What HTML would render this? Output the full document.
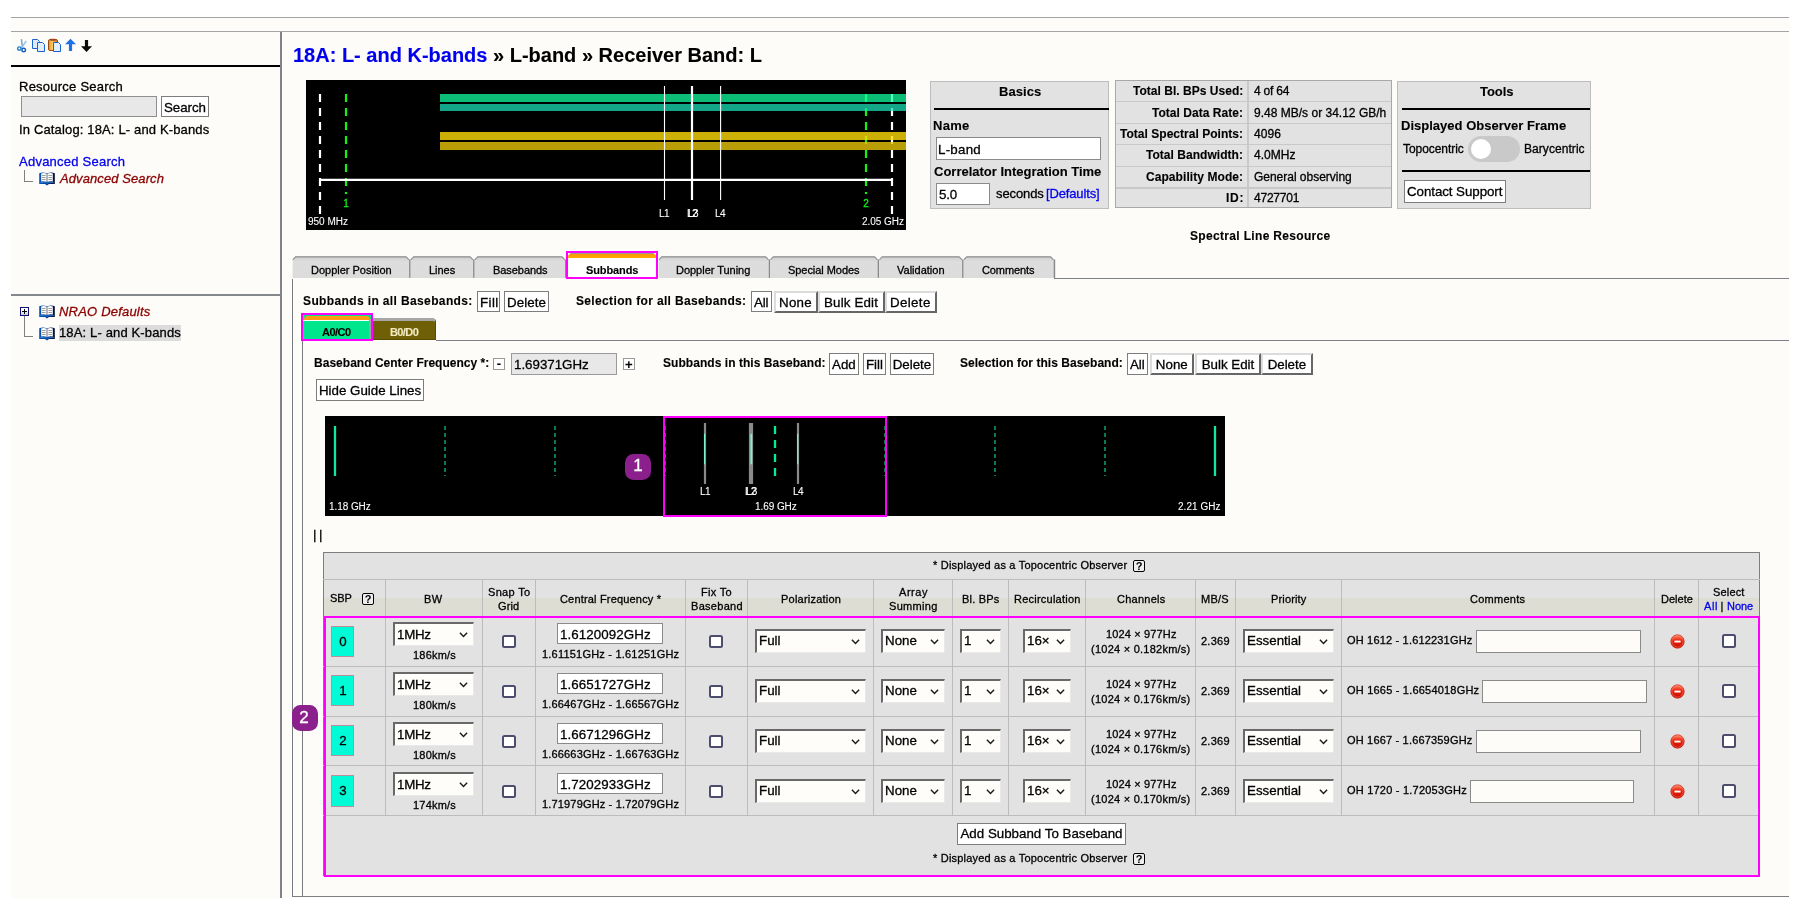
<!DOCTYPE html>
<html><head><meta charset="utf-8"><title>Resource Catalog Tool</title>
<style>
html,body{margin:0;padding:0;background:#fff;}
body{width:1805px;height:912px;position:relative;overflow:hidden;font-family:"Liberation Sans",Arial,Helvetica,sans-serif;}
.t{position:absolute;white-space:nowrap;-webkit-text-stroke:0.3px;will-change:transform;}
.bd{font-weight:bold;-webkit-text-stroke:0.12px;}
.b{position:absolute;}
.btn{position:absolute;box-sizing:border-box;border:1px solid #7d7d7d;background:#fff;}
.btn3{position:absolute;box-sizing:border-box;border:2px solid;border-color:#dcdcdc #666 #666 #dcdcdc;background:#fff;}
.sel{position:absolute;box-sizing:border-box;border:solid;border-width:2.2px 1.8px 1.9px 2.1px;border-color:#696969 #e9e9e9 #e9e9e9 #696969;background:#fefdfa;}
.sel .chev{position:absolute;right:4.6px;top:50%;margin-top:-2.2px;}
.chk{position:absolute;box-sizing:border-box;width:13.6px;height:13.6px;border:2px solid #4c4c6e;border-radius:2.5px;background:#fff;}
.inp{position:absolute;box-sizing:border-box;border:1px solid #8a8a8a;}
.q{position:absolute;box-sizing:border-box;width:12.2px;height:12.2px;border:1.2px solid #000;border-radius:2px;font-size:11px;font-weight:bold;line-height:10.6px;text-align:center;color:#000;background:#eee;will-change:transform;}
a{color:#0000ee;text-decoration:none}
</style></head><body>

<div class="b" style="left:11px;top:17px;width:1778px;height:880.5px;background:#fefcf8"></div>
<div class="b" style="left:11px;top:17px;width:1778px;height:1px;background:#a2a4a6"></div>
<div class="b" style="left:11px;top:31px;width:1778px;height:1px;background:#a2a4a6"></div>
<div class="b" style="left:280.1px;top:32px;width:1.9px;height:865.5px;background:#808488"></div>
<div class="b" style="left:11px;top:65px;width:269px;height:2px;background:#000"></div>
<div class="b" style="left:11px;top:294.3px;width:270px;height:1.6px;background:#84888c"></div>
<svg class="b" style="left:16px;top:38px" width="80" height="15" viewBox="0 0 80 15">
<path d="M5.4 1.2 L6.4 9.4" stroke="#6fa8dc" stroke-width="1.5" fill="none"/>
<path d="M10.2 3 L5.4 10" stroke="#9cc3e8" stroke-width="1.5" fill="none"/>
<circle cx="3.3" cy="10.6" r="1.7" fill="none" stroke="#1a7fd0" stroke-width="1.4"/>
<circle cx="7.7" cy="12" r="1.8" fill="none" stroke="#1a5fc0" stroke-width="1.4"/>
<path d="M16.5 1.5 H21.5 L23.5 3.5 V10.5 H16.5 Z" fill="#dfeafa" stroke="#1c62d2" stroke-width="1"/>
<path d="M21.5 4.5 H26.5 L28.5 6.5 V13.5 H21.5 Z" fill="#e3eefc" stroke="#1c62d2" stroke-width="1"/>
<defs><linearGradient id="pg" x1="0" y1="0" x2="1" y2="0"><stop offset="0" stop-color="#e09020"/><stop offset="0.45" stop-color="#f6cf6a"/><stop offset="1" stop-color="#c87410"/></linearGradient></defs><rect x="32.5" y="1.5" width="9" height="11" rx="1.5" fill="url(#pg)" stroke="#9a4a0c" stroke-width="1"/>
<rect x="34.5" y="0.8" width="5" height="2" fill="#a5401a"/>
<path d="M37.5 4.5 H42.5 L44.5 6.5 V13.5 H37.5 Z" fill="#e3eefc" stroke="#1c62d2" stroke-width="1"/>
<path d="M54.5 0.8 L60 6.2 H56.1 V13 H52.9 V6.2 H49 Z" fill="#1f6fe6"/>
<path d="M70.5 14 L76 8.2 H72.1 V2 H68.9 V8.2 H65 Z" fill="#0a0a0a"/>
</svg>
<div class="t" style="left:19px;top:79px;font-size:13px;line-height:16px;color:#000;letter-spacing:0.243px;">Resource Search</div>
<div class="inp" style="left:21px;top:96.3px;width:136px;height:21.200000000000003px;background:#e8e8e8;border-color:#8f8f8f"></div>
<div class="btn" style="left:161px;top:96.3px;width:48px;height:21.200000000000003px;"></div>
<div class="t" style="left:164px;top:100px;font-size:13.33px;line-height:16px;color:#000;letter-spacing:-0.060px;">Search</div>
<div class="t" style="left:19px;top:122px;font-size:13px;line-height:16px;color:#000;letter-spacing:0.150px;">In Catalog: 18A: L- and K-bands</div>
<div class="t" style="left:19px;top:154px;font-size:13px;line-height:16px;color:#0000ee;letter-spacing:0.243px;">Advanced Search</div>
<div class="b" style="left:24.1px;top:170px;width:1px;height:11.5px;background:#808080"></div>
<div class="b" style="left:24.1px;top:180.8px;width:8.8px;height:1px;background:#808080"></div>
<svg class="b" style="left:39px;top:172px" width="16" height="13.6" viewBox="0 0 16 13.6">
<defs><linearGradient id="bk172" x1="0" y1="0" x2="1" y2="0"><stop offset="0" stop-color="#0856b8"/><stop offset="0.55" stop-color="#063a98"/><stop offset="1" stop-color="#020a30"/></linearGradient></defs>
<path d="M0.2 1.2 Q4 -0.2 8 1.4 Q12 -0.2 15.8 1.2 V12 H10 L8 13.5 L6 12 H0.2 Z" fill="url(#bk172)"/>
<path d="M1 10.4 H6.6 L8 11.4 L9.4 10.4 H15" stroke="#2f8fe0" stroke-width="0.7" fill="none"/>
<path d="M2.2 1.5 Q5 0.5 7.9 1.9 V9.9 Q5 8.9 2.2 9.6 Z" fill="#fff"/>
<path d="M13.8 1.5 Q11 0.5 8.1 1.9 V9.9 Q11 8.9 13.8 9.6 Z" fill="#fff"/>
<path d="M8 1.9 V10" stroke="#666" stroke-width="0.8"/>
<path d="M3 3.5 H6.6 M3 5.5 H6.6 M3 7.5 H6.6 M9.4 3.5 H13 M9.4 5.5 H13 M9.4 7.5 H13" stroke="#9c9c9c" stroke-width="1"/>
</svg>
<div class="t" style="left:60px;top:171px;font-size:13px;line-height:16px;color:#8b0000;letter-spacing:0.093px;font-style:italic;">Advanced Search</div>
<div class="b" style="left:20px;top:307px;width:9.2px;height:9.2px;box-sizing:border-box;border:1.4px solid #10107a;background:linear-gradient(#fff 40%,#c8c8c8)"></div>
<div class="b" style="left:22px;top:311px;width:5.2px;height:1.2px;background:#000"></div>
<div class="b" style="left:24px;top:309px;width:1.2px;height:5.2px;background:#000"></div>
<div class="b" style="left:24.1px;top:316px;width:1px;height:21px;background:#808080"></div>
<div class="b" style="left:24.1px;top:336.3px;width:8.7px;height:1px;background:#808080"></div>
<svg class="b" style="left:39px;top:305px" width="16" height="13.6" viewBox="0 0 16 13.6">
<defs><linearGradient id="bk305" x1="0" y1="0" x2="1" y2="0"><stop offset="0" stop-color="#0856b8"/><stop offset="0.55" stop-color="#063a98"/><stop offset="1" stop-color="#020a30"/></linearGradient></defs>
<path d="M0.2 1.2 Q4 -0.2 8 1.4 Q12 -0.2 15.8 1.2 V12 H10 L8 13.5 L6 12 H0.2 Z" fill="url(#bk305)"/>
<path d="M1 10.4 H6.6 L8 11.4 L9.4 10.4 H15" stroke="#2f8fe0" stroke-width="0.7" fill="none"/>
<path d="M2.2 1.5 Q5 0.5 7.9 1.9 V9.9 Q5 8.9 2.2 9.6 Z" fill="#fff"/>
<path d="M13.8 1.5 Q11 0.5 8.1 1.9 V9.9 Q11 8.9 13.8 9.6 Z" fill="#fff"/>
<path d="M8 1.9 V10" stroke="#666" stroke-width="0.8"/>
<path d="M3 3.5 H6.6 M3 5.5 H6.6 M3 7.5 H6.6 M9.4 3.5 H13 M9.4 5.5 H13 M9.4 7.5 H13" stroke="#9c9c9c" stroke-width="1"/>
</svg>
<div class="t" style="left:59px;top:304px;font-size:13px;line-height:16px;color:#8b0000;letter-spacing:0.200px;font-style:italic;">NRAO Defaults</div>
<svg class="b" style="left:39px;top:327px" width="16" height="13.6" viewBox="0 0 16 13.6">
<defs><linearGradient id="bk327" x1="0" y1="0" x2="1" y2="0"><stop offset="0" stop-color="#0856b8"/><stop offset="0.55" stop-color="#063a98"/><stop offset="1" stop-color="#020a30"/></linearGradient></defs>
<path d="M0.2 1.2 Q4 -0.2 8 1.4 Q12 -0.2 15.8 1.2 V12 H10 L8 13.5 L6 12 H0.2 Z" fill="url(#bk327)"/>
<path d="M1 10.4 H6.6 L8 11.4 L9.4 10.4 H15" stroke="#2f8fe0" stroke-width="0.7" fill="none"/>
<path d="M2.2 1.5 Q5 0.5 7.9 1.9 V9.9 Q5 8.9 2.2 9.6 Z" fill="#fff"/>
<path d="M13.8 1.5 Q11 0.5 8.1 1.9 V9.9 Q11 8.9 13.8 9.6 Z" fill="#fff"/>
<path d="M8 1.9 V10" stroke="#666" stroke-width="0.8"/>
<path d="M3 3.5 H6.6 M3 5.5 H6.6 M3 7.5 H6.6 M9.4 3.5 H13 M9.4 5.5 H13 M9.4 7.5 H13" stroke="#9c9c9c" stroke-width="1"/>
</svg>
<div class="b" style="left:59px;top:325px;width:122px;height:16px;background:#dcdcdc"></div>
<div class="t" style="left:59px;top:325px;font-size:13px;line-height:16px;color:#000;letter-spacing:0.139px;">18A: L- and K-bands</div>
<div class="t" style="top:43.22px;font-size:20px;line-height:24px;color:#000;font-weight:bold;-webkit-text-stroke:0.12px;left:293px;"><a>18A: L- and K-bands</a> » L-band » Receiver Band: L</div>
<svg class="b" style="left:306px;top:80px" width="600" height="150" viewBox="0 0 600 150">
<rect width="600" height="150" fill="#000"/>
<path d="M14 14 V134 M586 14 V134" stroke="#fff" stroke-width="2.2" stroke-dasharray="8 6"/>
<path d="M40 14 V114 M560 14 V114" stroke="#14f014" stroke-width="2.2" stroke-dasharray="8 6"/>
<path d="M14 99.8 H586" stroke="#fff" stroke-width="2.2"/>
<rect x="134" y="14" width="466" height="8" fill="#10ffa0" fill-opacity="0.74"/>
<rect x="134" y="24" width="466" height="7" fill="#1ae0b8" fill-opacity="0.74"/>
<rect x="134" y="52" width="466" height="8" fill="#ffdc08" fill-opacity="0.8"/>
<rect x="134" y="62" width="466" height="8" fill="#e8c60a" fill-opacity="0.8"/>
<path d="M358.5 6 V120 M414.6 6 V120" stroke="#fff" stroke-width="1.1"/>
<path d="M386 6 V120" stroke="#fff" stroke-width="2.2"/>
</svg>
<div class="t" style="left:308px;top:216px;font-size:10px;line-height:12px;color:#fff;letter-spacing:0.000px;-webkit-text-stroke:0.08px;">950 MHz</div>
<div class="t" style="left:862px;top:216px;font-size:10px;line-height:12px;color:#fff;letter-spacing:-0.043px;-webkit-text-stroke:0.08px;">2.05 GHz</div>
<div class="t" style="left:659px;top:208px;font-size:10px;line-height:12px;color:#fff;letter-spacing:-0.600px;-webkit-text-stroke:0.08px;">L1</div>
<div class="t" style="left:687px;top:208px;font-size:10px;line-height:12px;color:#fff;letter-spacing:-0.600px;-webkit-text-stroke:0.08px;">L2</div>
<div class="t" style="left:688px;top:208px;font-size:10px;line-height:12px;color:#fff;letter-spacing:-0.600px;-webkit-text-stroke:0.08px;">L3</div>
<div class="t" style="left:715px;top:208px;font-size:10px;line-height:12px;color:#fff;letter-spacing:-0.600px;-webkit-text-stroke:0.08px;">L4</div>
<div class="t" style="top:197.78px;font-size:10px;line-height:12px;color:#14f014;left:335.8px;width:20px;text-align:center;">1</div>
<div class="t" style="top:197.78px;font-size:10px;line-height:12px;color:#14f014;left:856.0px;width:20px;text-align:center;">2</div>
<div class="b" style="left:930.3px;top:81.3px;width:178.5px;height:127.6px;box-sizing:border-box;background:#e2e2e2;border:1px solid #bdbdbd"></div>
<div class="t" style="left:999px;top:84px;font-size:13px;line-height:16px;color:#000;letter-spacing:0.060px;font-weight:bold;-webkit-text-stroke:0.12px;">Basics</div>
<div class="b" style="left:934px;top:107.8px;width:174.5px;height:2px;background:#000"></div>
<div class="t" style="left:933px;top:118px;font-size:13px;line-height:16px;color:#000;letter-spacing:0.267px;font-weight:bold;-webkit-text-stroke:0.12px;">Name</div>
<div class="inp" style="left:936.2px;top:137.3px;width:164.79999999999995px;height:22.399999999999977px;background:#fff;border-color:#8a8a8a"></div>
<div class="t" style="left:938px;top:142px;font-size:13.33px;line-height:16px;color:#000;letter-spacing:0.240px;">L-band</div>
<div class="t" style="left:934px;top:164px;font-size:13px;line-height:16px;color:#000;letter-spacing:0.000px;font-weight:bold;-webkit-text-stroke:0.12px;">Correlator Integration Time</div>
<div class="inp" style="left:936.2px;top:183.2px;width:53.39999999999998px;height:22.30000000000001px;background:#fff;border-color:#8a8a8a"></div>
<div class="t" style="left:939px;top:187px;font-size:13.33px;line-height:16px;color:#000;letter-spacing:-0.200px;">5.0</div>
<div class="t" style="left:996px;top:186px;font-size:13px;line-height:16px;color:#000;letter-spacing:-0.100px;">seconds</div>
<div class="t" style="left:1046px;top:186px;font-size:13px;line-height:16px;color:#0000ee;letter-spacing:-0.144px;">[Defaults]</div>
<div class="b" style="left:1114.5px;top:80.4px;width:277.0px;height:128.1px;box-sizing:border-box;background:#e2e2e2;border:1px solid #a8a8a8"></div>
<div class="b" style="left:1115.5px;top:100.5px;width:275.0px;height:1.8px;background:#c9c9c9"></div>
<div class="b" style="left:1115.5px;top:122.7px;width:275.0px;height:1.8px;background:#c9c9c9"></div>
<div class="b" style="left:1115.5px;top:143.6px;width:275.0px;height:1.8px;background:#c9c9c9"></div>
<div class="b" style="left:1115.5px;top:165.6px;width:275.0px;height:1.8px;background:#c9c9c9"></div>
<div class="b" style="left:1115.5px;top:186.89999999999998px;width:275.0px;height:1.8px;background:#c9c9c9"></div>
<div class="b" style="left:1247.4px;top:81.4px;width:1.8px;height:126px;background:#c9c9c9"></div>
<div class="t" style="left:1133px;top:84px;font-size:12px;line-height:14px;color:#000;letter-spacing:0.028px;font-weight:bold;-webkit-text-stroke:0.12px;">Total Bl. BPs Used:</div>
<div class="t" style="left:1254px;top:84px;font-size:12px;line-height:14px;color:#000;letter-spacing:-0.217px;">4 of 64</div>
<div class="t" style="left:1152px;top:106px;font-size:12px;line-height:14px;color:#000;letter-spacing:0.033px;font-weight:bold;-webkit-text-stroke:0.12px;">Total Data Rate:</div>
<div class="t" style="left:1254px;top:106px;font-size:12px;line-height:14px;color:#000;letter-spacing:0.009px;">9.48 MB/s or 34.12 GB/h</div>
<div class="t" style="left:1120px;top:127px;font-size:12px;line-height:14px;color:#000;letter-spacing:0.024px;font-weight:bold;-webkit-text-stroke:0.12px;">Total Spectral Points:</div>
<div class="t" style="left:1254px;top:127px;font-size:12px;line-height:14px;color:#000;letter-spacing:0.067px;">4096</div>
<div class="t" style="left:1146px;top:148px;font-size:12px;line-height:14px;color:#000;letter-spacing:0.033px;font-weight:bold;-webkit-text-stroke:0.12px;">Total Bandwidth:</div>
<div class="t" style="left:1254px;top:148px;font-size:12px;line-height:14px;color:#000;letter-spacing:0.040px;">4.0MHz</div>
<div class="t" style="left:1146px;top:170px;font-size:12px;line-height:14px;color:#000;letter-spacing:0.067px;font-weight:bold;-webkit-text-stroke:0.12px;">Capability Mode:</div>
<div class="t" style="left:1254px;top:170px;font-size:12px;line-height:14px;color:#000;letter-spacing:-0.019px;">General observing</div>
<div class="t" style="left:1226px;top:191px;font-size:12px;line-height:14px;color:#000;letter-spacing:0.750px;font-weight:bold;-webkit-text-stroke:0.12px;">ID:</div>
<div class="t" style="left:1254px;top:191px;font-size:12px;line-height:14px;color:#000;letter-spacing:-0.217px;">4727701</div>
<div class="b" style="left:1397.2px;top:81.3px;width:193.4px;height:127.6px;box-sizing:border-box;background:#e2e2e2;border:1px solid #bdbdbd"></div>
<div class="t" style="left:1480px;top:84px;font-size:13px;line-height:16px;color:#000;letter-spacing:-0.050px;font-weight:bold;-webkit-text-stroke:0.12px;">Tools</div>
<div class="b" style="left:1402.2px;top:107.8px;width:188px;height:2px;background:#000"></div>
<div class="t" style="left:1401px;top:118px;font-size:13px;line-height:16px;color:#000;letter-spacing:0.017px;font-weight:bold;-webkit-text-stroke:0.12px;">Displayed Observer Frame</div>
<div class="t" style="left:1403px;top:142px;font-size:12px;line-height:14px;color:#000;letter-spacing:-0.060px;">Topocentric</div>
<div class="b" style="left:1468px;top:136px;width:52px;height:26px;background:#c9c9c9;border-radius:13px"></div>
<div class="b" style="left:1470.5px;top:138.7px;width:20.8px;height:20.8px;background:#fff;border-radius:11px"></div>
<div class="t" style="left:1524px;top:142px;font-size:12px;line-height:14px;color:#000;letter-spacing:0.060px;">Barycentric</div>
<div class="b" style="left:1402.2px;top:170.2px;width:188px;height:2px;background:#000"></div>
<div class="btn" style="left:1404.2px;top:180.3px;width:101.70000000000005px;height:22.399999999999977px;"></div>
<div class="t" style="left:1407px;top:184px;font-size:13.33px;line-height:16px;color:#000;letter-spacing:-0.064px;">Contact Support</div>
<div class="t" style="left:1190px;top:229px;font-size:12px;line-height:14px;color:#000;letter-spacing:0.329px;font-weight:bold;-webkit-text-stroke:0.12px;">Spectral Line Resource</div>
<svg class="b" style="left:290px;top:250px" width="780" height="30" viewBox="290 250 780 30">
<defs><linearGradient id="tg" x1="0" y1="0" x2="0" y2="1"><stop offset="0" stop-color="#cfcfcf"/><stop offset="0.25" stop-color="#dddddd"/><stop offset="1" stop-color="#dcdcdc"/></linearGradient></defs>
<path d="M292.6 277.9 V259.4 L295.6 256.4 H406.09999999999997 L409.09999999999997 259.4 V277.9 Z" fill="url(#tg)"/>
<path d="M292.90000000000003 259.59999999999997 L295.6 256.9 H406.09999999999997 L408.79999999999995 259.59999999999997" fill="none" stroke="#8e8e8e" stroke-width="1.1"/>
<rect x="409.09999999999997" y="259.4" width="1.6" height="18.5" fill="#8a8a8a"/>
<path d="M410.7 277.9 V259.4 L413.7 256.4 H470.09999999999997 L473.09999999999997 259.4 V277.9 Z" fill="url(#tg)"/>
<path d="M411.0 259.59999999999997 L413.7 256.9 H470.09999999999997 L472.79999999999995 259.59999999999997" fill="none" stroke="#8e8e8e" stroke-width="1.1"/>
<rect x="473.09999999999997" y="259.4" width="1.6" height="18.5" fill="#8a8a8a"/>
<path d="M474.7 277.9 V259.4 L477.7 256.4 H562.0 L565.0 259.4 V277.9 Z" fill="url(#tg)"/>
<path d="M475.0 259.59999999999997 L477.7 256.9 H562.0 L564.7 259.59999999999997" fill="none" stroke="#8e8e8e" stroke-width="1.1"/>
<rect x="565.0" y="259.4" width="1.6" height="18.5" fill="#8a8a8a"/>
<path d="M658.8 277.9 V259.4 L661.8 256.4 H765.6999999999999 L768.6999999999999 259.4 V277.9 Z" fill="url(#tg)"/>
<path d="M659.0999999999999 259.59999999999997 L661.8 256.9 H765.6999999999999 L768.4 259.59999999999997" fill="none" stroke="#8e8e8e" stroke-width="1.1"/>
<rect x="768.6999999999999" y="259.4" width="1.6" height="18.5" fill="#8a8a8a"/>
<path d="M770.3 277.9 V259.4 L773.3 256.4 H874.6 L877.6 259.4 V277.9 Z" fill="url(#tg)"/>
<path d="M770.5999999999999 259.59999999999997 L773.3 256.9 H874.6 L877.3000000000001 259.59999999999997" fill="none" stroke="#8e8e8e" stroke-width="1.1"/>
<rect x="877.6" y="259.4" width="1.6" height="18.5" fill="#8a8a8a"/>
<path d="M879.2 277.9 V259.4 L882.2 256.4 H959.1 L962.1 259.4 V277.9 Z" fill="url(#tg)"/>
<path d="M879.5 259.59999999999997 L882.2 256.9 H959.1 L961.8000000000001 259.59999999999997" fill="none" stroke="#8e8e8e" stroke-width="1.1"/>
<rect x="962.1" y="259.4" width="1.6" height="18.5" fill="#8a8a8a"/>
<path d="M963.7 277.9 V259.4 L966.7 256.4 H1050.6000000000001 L1053.6000000000001 259.4 V277.9 Z" fill="url(#tg)"/>
<path d="M964.0 259.59999999999997 L966.7 256.9 H1050.6000000000001 L1053.3000000000002 259.59999999999997" fill="none" stroke="#8e8e8e" stroke-width="1.1"/>
<rect x="1053.6000000000001" y="259.4" width="1.6" height="18.5" fill="#8a8a8a"/>
</svg>
<div class="t" style="left:311px;top:264px;font-size:11px;line-height:13px;color:#000;letter-spacing:-0.007px;">Doppler Position</div>
<div class="t" style="left:429px;top:264px;font-size:11px;line-height:13px;color:#000;letter-spacing:-0.025px;">Lines</div>
<div class="t" style="left:493px;top:264px;font-size:11px;line-height:13px;color:#000;letter-spacing:-0.062px;">Basebands</div>
<div class="b" style="left:566px;top:251px;width:92.1px;height:27.9px;box-sizing:border-box;border:2px solid #ff00ff;background:#fff"></div>
<svg class="b" style="left:568px;top:253px" width="88.1" height="5.2" viewBox="0 0 88.1 5.2"><defs><linearGradient id="og" x1="0" y1="0" x2="0" y2="1"><stop offset="0" stop-color="#ff9500"/><stop offset="1" stop-color="#ffa900"/></linearGradient></defs><path d="M0 5.2 V2.6 L2.4 0.2 H85.7 L88.1 2.6 V5.2 Z" fill="url(#og)"/><path d="M2.4 0.6 H85.7" stroke="#8a9a8a" stroke-width="0.9"/></svg>
<div class="t" style="left:586px;top:264px;font-size:11px;line-height:13px;color:#000;letter-spacing:-0.100px;font-weight:bold;-webkit-text-stroke:0.12px;">Subbands</div>
<div class="t" style="left:676px;top:264px;font-size:11px;line-height:13px;color:#000;letter-spacing:-0.023px;">Doppler Tuning</div>
<div class="t" style="left:788px;top:264px;font-size:11px;line-height:13px;color:#000;letter-spacing:-0.050px;">Special Modes</div>
<div class="t" style="left:897px;top:264px;font-size:11px;line-height:13px;color:#000;letter-spacing:0.000px;">Validation</div>
<div class="t" style="left:982px;top:264px;font-size:11px;line-height:13px;color:#000;letter-spacing:-0.100px;">Comments</div>
<div class="b" style="left:1053.7px;top:278px;width:735.3px;height:1px;background:#7c8084"></div>
<div class="b" style="left:292px;top:279px;width:1.1px;height:618px;background:#777a7e"></div>
<div class="b" style="left:292px;top:896.2px;width:1497px;height:1px;background:#7c8084"></div>
<div class="t" style="left:303px;top:294px;font-size:12px;line-height:14px;color:#000;letter-spacing:0.372px;font-weight:bold;-webkit-text-stroke:0.12px;">Subbands in all Basebands:</div>
<div class="btn" style="left:477.2px;top:291.3px;width:22.5px;height:21.19999999999999px;"></div>
<div class="t" style="left:480px;top:295px;font-size:13.33px;line-height:16px;color:#000;letter-spacing:0.400px;">Fill</div>
<div class="btn" style="left:504.2px;top:291.3px;width:44.599999999999966px;height:21.19999999999999px;"></div>
<div class="t" style="left:507px;top:295px;font-size:13.33px;line-height:16px;color:#000;letter-spacing:0.080px;">Delete</div>
<div class="t" style="left:576px;top:294px;font-size:12px;line-height:14px;color:#000;letter-spacing:0.348px;font-weight:bold;-webkit-text-stroke:0.12px;">Selection for all Basebands:</div>
<div class="btn" style="left:751px;top:291.4px;width:20.600000000000023px;height:21.100000000000023px;"></div>
<div class="t" style="left:754px;top:295px;font-size:13.33px;line-height:16px;color:#000;letter-spacing:-0.200px;">All</div>
<div class="btn3" style="left:774.4px;top:291.4px;width:43.39999999999998px;height:21.600000000000023px;"></div>
<div class="t" style="left:779px;top:295px;font-size:13.33px;line-height:16px;color:#000;letter-spacing:0.267px;">None</div>
<div class="btn3" style="left:818px;top:291.4px;width:66.60000000000002px;height:21.600000000000023px;"></div>
<div class="t" style="left:824px;top:295px;font-size:13.33px;line-height:16px;color:#000;letter-spacing:0.162px;">Bulk Edit</div>
<div class="btn3" style="left:884.8px;top:291.4px;width:52.0px;height:21.600000000000023px;"></div>
<div class="t" style="left:890px;top:295px;font-size:13.33px;line-height:16px;color:#000;letter-spacing:0.360px;">Delete</div>
<div class="b" style="left:301px;top:313.2px;width:72px;height:27.6px;box-sizing:border-box;border:2px solid #ff00ff;background:#00e68c"></div>
<div class="b" style="left:303.5px;top:316.3px;width:66.5px;height:4.2px;background:#ff9c12;border-radius:4px 4px 0 0"></div>
<div class="b" style="left:303px;top:320.4px;width:67px;height:0.9px;background:#fff"></div>
<div class="b" style="left:369.3px;top:318.5px;width:1.7px;height:20.5px;background:#a0a0a0"></div>
<div class="t" style="left:322px;top:326px;font-size:11px;line-height:13px;color:#000;letter-spacing:-0.525px;font-weight:bold;-webkit-text-stroke:0.12px;">A0/C0</div>
<div class="b" style="left:373px;top:318px;width:62.8px;height:21.8px;background:#6f5f06;border-top:3px solid #a6a6a6;box-sizing:border-box;border-radius:0 4px 0 0;border-right:1px solid #5a4c04;border-bottom:1px solid #5a4c04"></div>
<div class="t" style="left:390px;top:326px;font-size:11px;line-height:13px;color:#f3ebc0;letter-spacing:-0.600px;font-weight:bold;-webkit-text-stroke:0.12px;">B0/D0</div>
<div class="b" style="left:435.8px;top:340px;width:1353.2px;height:1px;background:#7c8084"></div>
<div class="b" style="left:302.1px;top:340.5px;width:1px;height:556px;background:#777a7e"></div>
<div class="t" style="left:314px;top:356px;font-size:12px;line-height:14px;color:#000;letter-spacing:0.022px;font-weight:bold;-webkit-text-stroke:0.12px;">Baseband Center Frequency *:</div>
<div class="btn" style="left:493.1px;top:358.3px;width:11.599999999999966px;height:11.399999999999977px;border-color:#9a9a9a"></div>
<div class="t" style="top:356.35px;font-size:13px;line-height:16px;color:#000;font-weight:bold;-webkit-text-stroke:0.12px;left:473.1px;width:51.599999999999966px;text-align:center;">-</div>
<div class="inp" style="left:511.1px;top:353.3px;width:105.89999999999998px;height:21.399999999999977px;background:#e8e8e8;border-color:#9a9a9a"></div>
<div class="t" style="left:514px;top:357px;font-size:13.33px;line-height:16px;color:#000;letter-spacing:-0.011px;">1.69371GHz</div>
<div class="btn" style="left:623.2px;top:358.3px;width:11.599999999999909px;height:11.399999999999977px;border-color:#9a9a9a"></div>
<div class="t" style="top:357.45px;font-size:13px;line-height:16px;color:#000;font-weight:bold;-webkit-text-stroke:0.12px;left:603.2px;width:51.59999999999991px;text-align:center;">+</div>
<div class="t" style="left:663px;top:356px;font-size:12px;line-height:14px;color:#000;letter-spacing:0.048px;font-weight:bold;-webkit-text-stroke:0.12px;">Subbands in this Baseband:</div>
<div class="btn" style="left:828.9px;top:353.2px;width:29.800000000000068px;height:21.400000000000034px;"></div>
<div class="t" style="top:357.13px;font-size:13.33px;line-height:16px;color:#000;left:808.8999999999999px;width:69.80000000000007px;text-align:center;">Add</div>
<div class="btn" style="left:863px;top:353.2px;width:22.899999999999977px;height:21.400000000000034px;"></div>
<div class="t" style="top:357.13px;font-size:13.33px;line-height:16px;color:#000;left:843.0px;width:62.89999999999998px;text-align:center;">Fill</div>
<div class="btn" style="left:890.1px;top:353.2px;width:43.89999999999998px;height:21.400000000000034px;"></div>
<div class="t" style="top:357.13px;font-size:13.33px;line-height:16px;color:#000;left:870.0999999999999px;width:83.89999999999998px;text-align:center;">Delete</div>
<div class="t" style="left:960px;top:356px;font-size:12px;line-height:14px;color:#000;letter-spacing:0.030px;font-weight:bold;-webkit-text-stroke:0.12px;">Selection for this Baseband:</div>
<div class="btn" style="left:1127px;top:353.2px;width:20.59999999999991px;height:21.400000000000034px;"></div>
<div class="t" style="top:357.13px;font-size:13.33px;line-height:16px;color:#000;left:1107.0px;width:60.59999999999991px;text-align:center;">All</div>
<div class="btn3" style="left:1150.4px;top:353.2px;width:43.59999999999991px;height:21.80000000000001px;"></div>
<div class="t" style="top:357.13px;font-size:13.33px;line-height:16px;color:#000;left:1130.4px;width:83.59999999999991px;text-align:center;">None</div>
<div class="btn3" style="left:1194.6px;top:353.2px;width:66.0px;height:21.80000000000001px;"></div>
<div class="t" style="top:357.13px;font-size:13.33px;line-height:16px;color:#000;left:1174.6px;width:106.0px;text-align:center;">Bulk Edit</div>
<div class="btn3" style="left:1261px;top:353.2px;width:51.799999999999955px;height:21.80000000000001px;"></div>
<div class="t" style="top:357.13px;font-size:13.33px;line-height:16px;color:#000;left:1241.0px;width:91.79999999999995px;text-align:center;">Delete</div>
<div class="btn" style="left:315.5px;top:379.3px;width:108.10000000000002px;height:22.19999999999999px;"></div>
<div class="t" style="top:383.23px;font-size:13.33px;line-height:16px;color:#000;left:295.5px;width:148.10000000000002px;text-align:center;">Hide Guide Lines</div>
<svg class="b" style="left:325px;top:416px" width="900" height="100" viewBox="0 0 900 100">
<rect width="900" height="100" fill="#000"/>
<path d="M10 10 V60 M890 10 V60" stroke="#12e8a0" stroke-width="2.3"/>
<path d="M120 10 V60 M230 10 V60 M340 10 V60 M560 10 V60 M670 10 V60 M780 10 V60" stroke="#0b7a52" stroke-width="2" stroke-dasharray="4 3"/>
<path d="M380 7 V68 M473 7 V68" stroke="#8a8a8a" stroke-width="2.2"/>
<path d="M426 7 V68" stroke="#8a8a8a" stroke-width="4.2"/>
<path d="M379.6 17.8 V48.2 M472.7 17.8 V48.2" stroke="#7ff0d0" stroke-width="1.2"/><path d="M426.3 17.8 V48.2" stroke="#7ff0d0" stroke-width="1.7"/>
<path d="M450 10 V60" stroke="#00ee96" stroke-width="2.3" stroke-dasharray="8 6"/>
</svg>
<div class="t" style="left:700px;top:486px;font-size:10px;line-height:12px;color:#fff;letter-spacing:-0.600px;-webkit-text-stroke:0.08px;">L1</div>
<div class="t" style="left:745px;top:486px;font-size:10px;line-height:12px;color:#fff;letter-spacing:0.200px;-webkit-text-stroke:0.08px;">L2</div>
<div class="t" style="left:746px;top:486px;font-size:10px;line-height:12px;color:#fff;letter-spacing:0.100px;-webkit-text-stroke:0.08px;">L3</div>
<div class="t" style="left:793px;top:486px;font-size:10px;line-height:12px;color:#fff;letter-spacing:-0.600px;-webkit-text-stroke:0.08px;">L4</div>
<div class="t" style="left:755px;top:501px;font-size:10px;line-height:12px;color:#fff;letter-spacing:-0.071px;-webkit-text-stroke:0.08px;">1.69 GHz</div>
<div class="t" style="left:329px;top:501px;font-size:10px;line-height:12px;color:#fff;letter-spacing:-0.071px;-webkit-text-stroke:0.08px;">1.18 GHz</div>
<div class="t" style="left:1178px;top:501px;font-size:10px;line-height:12px;color:#fff;letter-spacing:0.043px;-webkit-text-stroke:0.08px;">2.21 GHz</div>
<div class="b" style="left:663px;top:416.3px;width:224px;height:100.4px;box-sizing:border-box;border:2px solid #ff00ff"></div>
<div class="b" style="left:625.2px;top:454.1px;width:25.7px;height:25.9px;background:#8b1f8b;border-radius:8.5px"></div>
<div class="t" style="top:456.46px;font-size:17px;line-height:20px;color:#fff;left:624.6px;width:26px;text-align:center;">1</div>
<div class="t" style="left:313px;top:527px;font-size:13px;line-height:16px;color:#000;letter-spacing:-0.500px;">| |</div>
<div class="b" style="left:323.3px;top:552.5px;width:1436.5px;height:324px;background:#e2e2e2"></div>
<div class="b" style="left:323.3px;top:598.4px;width:1436.5px;height:17.4px;background:#deddd3"></div>
<div class="b" style="left:323.3px;top:552.3px;width:1436.5px;height:1.1px;background:#7c7e82"></div>
<div class="b" style="left:322.8px;top:552.3px;width:1.1px;height:324px;background:#7c7e82"></div>
<div class="b" style="left:1759.0px;top:552.3px;width:1.1px;height:324px;background:#7c7e82"></div>
<div class="b" style="left:323.3px;top:578.7px;width:1436.5px;height:1px;background:#bcbcbc"></div>
<div class="b" style="left:323.3px;top:665.7px;width:1436.5px;height:1px;background:#bcbcbc"></div>
<div class="b" style="left:323.3px;top:715.5px;width:1436.5px;height:1px;background:#bcbcbc"></div>
<div class="b" style="left:323.3px;top:765.2px;width:1436.5px;height:1px;background:#bcbcbc"></div>
<div class="b" style="left:323.3px;top:814.9px;width:1436.5px;height:1px;background:#bcbcbc"></div>
<div class="b" style="left:384.9px;top:579.2px;width:1px;height:237px;background:#bcbcbc"></div>
<div class="b" style="left:481.5px;top:579.2px;width:1px;height:237px;background:#bcbcbc"></div>
<div class="b" style="left:534.8px;top:579.2px;width:1px;height:237px;background:#bcbcbc"></div>
<div class="b" style="left:685.1px;top:579.2px;width:1px;height:237px;background:#bcbcbc"></div>
<div class="b" style="left:746.9px;top:579.2px;width:1px;height:237px;background:#bcbcbc"></div>
<div class="b" style="left:872.9px;top:579.2px;width:1px;height:237px;background:#bcbcbc"></div>
<div class="b" style="left:952.0px;top:579.2px;width:1px;height:237px;background:#bcbcbc"></div>
<div class="b" style="left:1008.0px;top:579.2px;width:1px;height:237px;background:#bcbcbc"></div>
<div class="b" style="left:1084.9px;top:579.2px;width:1px;height:237px;background:#bcbcbc"></div>
<div class="b" style="left:1195.1px;top:579.2px;width:1px;height:237px;background:#bcbcbc"></div>
<div class="b" style="left:1234.8px;top:579.2px;width:1px;height:237px;background:#bcbcbc"></div>
<div class="b" style="left:1341.1px;top:579.2px;width:1px;height:237px;background:#bcbcbc"></div>
<div class="b" style="left:1654.1px;top:579.2px;width:1px;height:237px;background:#bcbcbc"></div>
<div class="b" style="left:1698.0px;top:579.2px;width:1px;height:237px;background:#bcbcbc"></div>
<div class="t" style="left:933px;top:559px;font-size:11px;line-height:13px;color:#000;letter-spacing:0.200px;">* Displayed as a Topocentric Observer</div>
<div class="q" style="left:1133px;top:559.7px">?</div>
<div class="t" style="left:330px;top:592px;font-size:11px;line-height:13px;color:#000;letter-spacing:-0.050px;">SBP</div>
<div class="q" style="left:362px;top:593px">?</div>
<div class="t" style="left:424px;top:593px;font-size:11px;line-height:13px;color:#000;letter-spacing:0.300px;">BW</div>
<div class="t" style="left:488px;top:586px;font-size:11px;line-height:13px;color:#000;letter-spacing:0.333px;">Snap To</div>
<div class="t" style="left:498px;top:600px;font-size:11px;line-height:13px;color:#000;letter-spacing:0.133px;">Grid</div>
<div class="t" style="left:560px;top:593px;font-size:11px;line-height:13px;color:#000;letter-spacing:0.178px;">Central Frequency *</div>
<div class="t" style="left:701px;top:586px;font-size:11px;line-height:13px;color:#000;letter-spacing:0.300px;">Fix To</div>
<div class="t" style="left:691px;top:600px;font-size:11px;line-height:13px;color:#000;letter-spacing:0.300px;">Baseband</div>
<div class="t" style="left:781px;top:593px;font-size:11px;line-height:13px;color:#000;letter-spacing:0.218px;">Polarization</div>
<div class="t" style="left:899px;top:586px;font-size:11px;line-height:13px;color:#000;letter-spacing:0.550px;">Array</div>
<div class="t" style="left:889px;top:600px;font-size:11px;line-height:13px;color:#000;letter-spacing:0.300px;">Summing</div>
<div class="t" style="left:962px;top:593px;font-size:11px;line-height:13px;color:#000;letter-spacing:0.217px;">Bl. BPs</div>
<div class="t" style="left:1014px;top:593px;font-size:11px;line-height:13px;color:#000;letter-spacing:0.233px;">Recirculation</div>
<div class="t" style="left:1117px;top:593px;font-size:11px;line-height:13px;color:#000;letter-spacing:0.257px;">Channels</div>
<div class="t" style="left:1201px;top:593px;font-size:11px;line-height:13px;color:#000;letter-spacing:0.267px;">MB/S</div>
<div class="t" style="left:1271px;top:593px;font-size:11px;line-height:13px;color:#000;letter-spacing:0.157px;">Priority</div>
<div class="t" style="left:1470px;top:593px;font-size:11px;line-height:13px;color:#000;letter-spacing:0.257px;">Comments</div>
<div class="t" style="left:1661px;top:593px;font-size:11px;line-height:13px;color:#000;letter-spacing:0.020px;">Delete</div>
<div class="t" style="left:1713px;top:586px;font-size:11px;line-height:13px;color:#000;letter-spacing:0.160px;">Select</div>
<div class="t" style="left:1704px;top:600px;font-size:11px;line-height:13px;color:#0000ee;letter-spacing:0.650px;">All</div>
<div class="t" style="top:600.04px;font-size:11px;line-height:13px;color:#000;left:1717.2px;width:10px;text-align:center;">|</div>
<div class="t" style="left:1727px;top:600px;font-size:11px;line-height:13px;color:#0000ee;letter-spacing:-0.067px;">None</div>
<div class="b" style="left:331.2px;top:626.4px;width:22.6px;height:30.200000000000045px;box-sizing:border-box;background:#00fbd6;border:1px solid #b8909c"></div>
<div class="t" style="top:633.93px;font-size:13.33px;line-height:16px;color:#000;left:331.7px;width:22px;text-align:center;">0</div>
<div class="sel" style="left:392.9px;top:621.9px;width:81.0px;height:23.899999999999977px"><svg class="chev" width="9" height="6" viewBox="0 0 9 6"><path d="M0.9 0.8 L4.5 4.6 L8.1 0.8" fill="none" stroke="#1a1a1a" stroke-width="1.4"/></svg></div>
<div class="t" style="left:397px;top:627px;font-size:13.33px;line-height:16px;color:#000;letter-spacing:-0.267px;">1MHz</div>
<div class="t" style="left:413px;top:649px;font-size:11px;line-height:13px;color:#000;letter-spacing:0.200px;">186km/s</div>
<div class="chk" style="left:502.3px;top:634.5px"></div>
<div class="inp" style="left:557px;top:623.2px;width:105.79999999999995px;height:21.199999999999932px;background:#fff;border-color:#8a8a8a"></div>
<div class="t" style="left:560px;top:627px;font-size:13.33px;line-height:16px;color:#000;letter-spacing:0.091px;">1.6120092GHz</div>
<div class="t" style="left:542px;top:648px;font-size:11px;line-height:13px;color:#000;letter-spacing:0.209px;">1.61151GHz - 1.61251GHz</div>
<div class="chk" style="left:709px;top:634.5px"></div>
<div class="sel" style="left:755px;top:629.0px;width:110.79999999999995px;height:24.0px"><svg class="chev" width="9" height="6" viewBox="0 0 9 6"><path d="M0.9 0.8 L4.5 4.6 L8.1 0.8" fill="none" stroke="#1a1a1a" stroke-width="1.4"/></svg></div>
<div class="t" style="top:633.43px;font-size:13.33px;line-height:16px;color:#000;left:759px;">Full</div>
<div class="sel" style="left:880.9px;top:629.0px;width:63.700000000000045px;height:24.0px"><svg class="chev" width="9" height="6" viewBox="0 0 9 6"><path d="M0.9 0.8 L4.5 4.6 L8.1 0.8" fill="none" stroke="#1a1a1a" stroke-width="1.4"/></svg></div>
<div class="t" style="top:633.43px;font-size:13.33px;line-height:16px;color:#000;left:884.9px;">None</div>
<div class="sel" style="left:959.9px;top:629.0px;width:40.80000000000007px;height:24.0px"><svg class="chev" width="9" height="6" viewBox="0 0 9 6"><path d="M0.9 0.8 L4.5 4.6 L8.1 0.8" fill="none" stroke="#1a1a1a" stroke-width="1.4"/></svg></div>
<div class="t" style="top:633.43px;font-size:13.33px;line-height:16px;color:#000;left:963.9px;">1</div>
<div class="sel" style="left:1022.8px;top:629.0px;width:47.799999999999955px;height:24.0px"><svg class="chev" width="9" height="6" viewBox="0 0 9 6"><path d="M0.9 0.8 L4.5 4.6 L8.1 0.8" fill="none" stroke="#1a1a1a" stroke-width="1.4"/></svg></div>
<div class="t" style="top:633.43px;font-size:13.33px;line-height:16px;color:#000;left:1026.8px;">16×</div>
<div class="t" style="left:1106px;top:628px;font-size:11px;line-height:13px;color:#000;letter-spacing:0.145px;">1024 × 977Hz</div>
<div class="t" style="left:1091px;top:643px;font-size:11px;line-height:13px;color:#000;letter-spacing:0.247px;">(1024 × 0.182km/s)</div>
<div class="t" style="left:1201px;top:635px;font-size:11px;line-height:13px;color:#000;letter-spacing:0.250px;">2.369</div>
<div class="sel" style="left:1242.8px;top:629.0px;width:91.0px;height:24.0px"><svg class="chev" width="9" height="6" viewBox="0 0 9 6"><path d="M0.9 0.8 L4.5 4.6 L8.1 0.8" fill="none" stroke="#1a1a1a" stroke-width="1.4"/></svg></div>
<div class="t" style="top:633.43px;font-size:13.33px;line-height:16px;color:#000;left:1246.8px;">Essential</div>
<div class="t" style="left:1347px;top:634px;font-size:11px;line-height:13px;color:#000;letter-spacing:0.180px;">OH 1612 - 1.612231GHz</div>
<div class="inp" style="left:1476.2px;top:630.3px;width:164.5999999999999px;height:22.5px;background:#fefcf8;border-color:#8a8a8a"></div>
<svg class="b" style="left:1669.6px;top:633.6px" width="15" height="15" viewBox="0 0 15 15">
<defs><linearGradient id="rg0" x1="0" y1="0" x2="0" y2="1"><stop offset="0" stop-color="#ff8a6a"/><stop offset="0.45" stop-color="#ea2008"/><stop offset="1" stop-color="#c60e00"/></linearGradient></defs>
<circle cx="7.5" cy="7.5" r="6.7" fill="url(#rg0)" stroke="#d01c0c" stroke-width="0.7"/><circle cx="7.5" cy="7.5" r="5.6" fill="none" stroke="#ffb0a0" stroke-opacity="0.45" stroke-width="0.8"/>
<rect x="4.4" y="6.6" width="6.2" height="1.9" fill="#fff"/></svg>
<div class="chk" style="left:1722.1px;top:634.2px"></div>
<div class="b" style="left:331.2px;top:675.1px;width:22.6px;height:31.399999999999977px;box-sizing:border-box;background:#00fbd6;border:1px solid #b8909c"></div>
<div class="t" style="top:683.23px;font-size:13.33px;line-height:16px;color:#000;left:331.7px;width:22px;text-align:center;">1</div>
<div class="sel" style="left:392.9px;top:671.9px;width:81.0px;height:23.899999999999977px"><svg class="chev" width="9" height="6" viewBox="0 0 9 6"><path d="M0.9 0.8 L4.5 4.6 L8.1 0.8" fill="none" stroke="#1a1a1a" stroke-width="1.4"/></svg></div>
<div class="t" style="left:397px;top:677px;font-size:13.33px;line-height:16px;color:#000;letter-spacing:-0.267px;">1MHz</div>
<div class="t" style="left:413px;top:699px;font-size:11px;line-height:13px;color:#000;letter-spacing:0.200px;">180km/s</div>
<div class="chk" style="left:502.3px;top:684.5px"></div>
<div class="inp" style="left:557px;top:673.2px;width:105.79999999999995px;height:21.199999999999932px;background:#fff;border-color:#8a8a8a"></div>
<div class="t" style="left:560px;top:677px;font-size:13.33px;line-height:16px;color:#000;letter-spacing:0.091px;">1.6651727GHz</div>
<div class="t" style="left:542px;top:698px;font-size:11px;line-height:13px;color:#000;letter-spacing:0.164px;">1.66467GHz - 1.66567GHz</div>
<div class="chk" style="left:709px;top:684.5px"></div>
<div class="sel" style="left:755px;top:679.0px;width:110.79999999999995px;height:24.0px"><svg class="chev" width="9" height="6" viewBox="0 0 9 6"><path d="M0.9 0.8 L4.5 4.6 L8.1 0.8" fill="none" stroke="#1a1a1a" stroke-width="1.4"/></svg></div>
<div class="t" style="top:683.43px;font-size:13.33px;line-height:16px;color:#000;left:759px;">Full</div>
<div class="sel" style="left:880.9px;top:679.0px;width:63.700000000000045px;height:24.0px"><svg class="chev" width="9" height="6" viewBox="0 0 9 6"><path d="M0.9 0.8 L4.5 4.6 L8.1 0.8" fill="none" stroke="#1a1a1a" stroke-width="1.4"/></svg></div>
<div class="t" style="top:683.43px;font-size:13.33px;line-height:16px;color:#000;left:884.9px;">None</div>
<div class="sel" style="left:959.9px;top:679.0px;width:40.80000000000007px;height:24.0px"><svg class="chev" width="9" height="6" viewBox="0 0 9 6"><path d="M0.9 0.8 L4.5 4.6 L8.1 0.8" fill="none" stroke="#1a1a1a" stroke-width="1.4"/></svg></div>
<div class="t" style="top:683.43px;font-size:13.33px;line-height:16px;color:#000;left:963.9px;">1</div>
<div class="sel" style="left:1022.8px;top:679.0px;width:47.799999999999955px;height:24.0px"><svg class="chev" width="9" height="6" viewBox="0 0 9 6"><path d="M0.9 0.8 L4.5 4.6 L8.1 0.8" fill="none" stroke="#1a1a1a" stroke-width="1.4"/></svg></div>
<div class="t" style="top:683.43px;font-size:13.33px;line-height:16px;color:#000;left:1026.8px;">16×</div>
<div class="t" style="left:1106px;top:678px;font-size:11px;line-height:13px;color:#000;letter-spacing:0.145px;">1024 × 977Hz</div>
<div class="t" style="left:1091px;top:693px;font-size:11px;line-height:13px;color:#000;letter-spacing:0.247px;">(1024 × 0.176km/s)</div>
<div class="t" style="left:1201px;top:685px;font-size:11px;line-height:13px;color:#000;letter-spacing:0.250px;">2.369</div>
<div class="sel" style="left:1242.8px;top:679.0px;width:91.0px;height:24.0px"><svg class="chev" width="9" height="6" viewBox="0 0 9 6"><path d="M0.9 0.8 L4.5 4.6 L8.1 0.8" fill="none" stroke="#1a1a1a" stroke-width="1.4"/></svg></div>
<div class="t" style="top:683.43px;font-size:13.33px;line-height:16px;color:#000;left:1246.8px;">Essential</div>
<div class="t" style="left:1347px;top:684px;font-size:11px;line-height:13px;color:#000;letter-spacing:0.205px;">OH 1665 - 1.6654018GHz</div>
<div class="inp" style="left:1482px;top:680.3px;width:164.5999999999999px;height:22.5px;background:#fefcf8;border-color:#8a8a8a"></div>
<svg class="b" style="left:1669.6px;top:683.6px" width="15" height="15" viewBox="0 0 15 15">
<defs><linearGradient id="rg1" x1="0" y1="0" x2="0" y2="1"><stop offset="0" stop-color="#ff8a6a"/><stop offset="0.45" stop-color="#ea2008"/><stop offset="1" stop-color="#c60e00"/></linearGradient></defs>
<circle cx="7.5" cy="7.5" r="6.7" fill="url(#rg1)" stroke="#d01c0c" stroke-width="0.7"/><circle cx="7.5" cy="7.5" r="5.6" fill="none" stroke="#ffb0a0" stroke-opacity="0.45" stroke-width="0.8"/>
<rect x="4.4" y="6.6" width="6.2" height="1.9" fill="#fff"/></svg>
<div class="chk" style="left:1722.1px;top:684.2px"></div>
<div class="b" style="left:331.2px;top:725.3px;width:22.6px;height:31.100000000000023px;box-sizing:border-box;background:#00fbd6;border:1px solid #b8909c"></div>
<div class="t" style="top:733.28px;font-size:13.33px;line-height:16px;color:#000;left:331.7px;width:22px;text-align:center;">2</div>
<div class="sel" style="left:392.9px;top:721.9px;width:81.0px;height:23.899999999999977px"><svg class="chev" width="9" height="6" viewBox="0 0 9 6"><path d="M0.9 0.8 L4.5 4.6 L8.1 0.8" fill="none" stroke="#1a1a1a" stroke-width="1.4"/></svg></div>
<div class="t" style="left:397px;top:727px;font-size:13.33px;line-height:16px;color:#000;letter-spacing:-0.267px;">1MHz</div>
<div class="t" style="left:413px;top:749px;font-size:11px;line-height:13px;color:#000;letter-spacing:0.200px;">180km/s</div>
<div class="chk" style="left:502.3px;top:734.5px"></div>
<div class="inp" style="left:557px;top:723.2px;width:105.79999999999995px;height:21.199999999999932px;background:#fff;border-color:#8a8a8a"></div>
<div class="t" style="left:560px;top:727px;font-size:13.33px;line-height:16px;color:#000;letter-spacing:0.091px;">1.6671296GHz</div>
<div class="t" style="left:542px;top:748px;font-size:11px;line-height:13px;color:#000;letter-spacing:0.164px;">1.66663GHz - 1.66763GHz</div>
<div class="chk" style="left:709px;top:734.5px"></div>
<div class="sel" style="left:755px;top:729.0px;width:110.79999999999995px;height:24.0px"><svg class="chev" width="9" height="6" viewBox="0 0 9 6"><path d="M0.9 0.8 L4.5 4.6 L8.1 0.8" fill="none" stroke="#1a1a1a" stroke-width="1.4"/></svg></div>
<div class="t" style="top:733.43px;font-size:13.33px;line-height:16px;color:#000;left:759px;">Full</div>
<div class="sel" style="left:880.9px;top:729.0px;width:63.700000000000045px;height:24.0px"><svg class="chev" width="9" height="6" viewBox="0 0 9 6"><path d="M0.9 0.8 L4.5 4.6 L8.1 0.8" fill="none" stroke="#1a1a1a" stroke-width="1.4"/></svg></div>
<div class="t" style="top:733.43px;font-size:13.33px;line-height:16px;color:#000;left:884.9px;">None</div>
<div class="sel" style="left:959.9px;top:729.0px;width:40.80000000000007px;height:24.0px"><svg class="chev" width="9" height="6" viewBox="0 0 9 6"><path d="M0.9 0.8 L4.5 4.6 L8.1 0.8" fill="none" stroke="#1a1a1a" stroke-width="1.4"/></svg></div>
<div class="t" style="top:733.43px;font-size:13.33px;line-height:16px;color:#000;left:963.9px;">1</div>
<div class="sel" style="left:1022.8px;top:729.0px;width:47.799999999999955px;height:24.0px"><svg class="chev" width="9" height="6" viewBox="0 0 9 6"><path d="M0.9 0.8 L4.5 4.6 L8.1 0.8" fill="none" stroke="#1a1a1a" stroke-width="1.4"/></svg></div>
<div class="t" style="top:733.43px;font-size:13.33px;line-height:16px;color:#000;left:1026.8px;">16×</div>
<div class="t" style="left:1106px;top:728px;font-size:11px;line-height:13px;color:#000;letter-spacing:0.145px;">1024 × 977Hz</div>
<div class="t" style="left:1091px;top:743px;font-size:11px;line-height:13px;color:#000;letter-spacing:0.247px;">(1024 × 0.176km/s)</div>
<div class="t" style="left:1201px;top:735px;font-size:11px;line-height:13px;color:#000;letter-spacing:0.250px;">2.369</div>
<div class="sel" style="left:1242.8px;top:729.0px;width:91.0px;height:24.0px"><svg class="chev" width="9" height="6" viewBox="0 0 9 6"><path d="M0.9 0.8 L4.5 4.6 L8.1 0.8" fill="none" stroke="#1a1a1a" stroke-width="1.4"/></svg></div>
<div class="t" style="top:733.43px;font-size:13.33px;line-height:16px;color:#000;left:1246.8px;">Essential</div>
<div class="t" style="left:1347px;top:734px;font-size:11px;line-height:13px;color:#000;letter-spacing:0.180px;">OH 1667 - 1.667359GHz</div>
<div class="inp" style="left:1476.2px;top:730.3px;width:164.5999999999999px;height:22.5px;background:#fefcf8;border-color:#8a8a8a"></div>
<svg class="b" style="left:1669.6px;top:733.6px" width="15" height="15" viewBox="0 0 15 15">
<defs><linearGradient id="rg2" x1="0" y1="0" x2="0" y2="1"><stop offset="0" stop-color="#ff8a6a"/><stop offset="0.45" stop-color="#ea2008"/><stop offset="1" stop-color="#c60e00"/></linearGradient></defs>
<circle cx="7.5" cy="7.5" r="6.7" fill="url(#rg2)" stroke="#d01c0c" stroke-width="0.7"/><circle cx="7.5" cy="7.5" r="5.6" fill="none" stroke="#ffb0a0" stroke-opacity="0.45" stroke-width="0.8"/>
<rect x="4.4" y="6.6" width="6.2" height="1.9" fill="#fff"/></svg>
<div class="chk" style="left:1722.1px;top:734.2px"></div>
<div class="b" style="left:331.2px;top:775.3px;width:22.6px;height:31.300000000000068px;box-sizing:border-box;background:#00fbd6;border:1px solid #b8909c"></div>
<div class="t" style="top:783.38px;font-size:13.33px;line-height:16px;color:#000;left:331.7px;width:22px;text-align:center;">3</div>
<div class="sel" style="left:392.9px;top:771.9px;width:81.0px;height:23.899999999999977px"><svg class="chev" width="9" height="6" viewBox="0 0 9 6"><path d="M0.9 0.8 L4.5 4.6 L8.1 0.8" fill="none" stroke="#1a1a1a" stroke-width="1.4"/></svg></div>
<div class="t" style="left:397px;top:777px;font-size:13.33px;line-height:16px;color:#000;letter-spacing:-0.267px;">1MHz</div>
<div class="t" style="left:413px;top:799px;font-size:11px;line-height:13px;color:#000;letter-spacing:0.200px;">174km/s</div>
<div class="chk" style="left:502.3px;top:784.5px"></div>
<div class="inp" style="left:557px;top:773.2px;width:105.79999999999995px;height:21.199999999999932px;background:#fff;border-color:#8a8a8a"></div>
<div class="t" style="left:560px;top:777px;font-size:13.33px;line-height:16px;color:#000;letter-spacing:0.091px;">1.7202933GHz</div>
<div class="t" style="left:542px;top:798px;font-size:11px;line-height:13px;color:#000;letter-spacing:0.164px;">1.71979GHz - 1.72079GHz</div>
<div class="chk" style="left:709px;top:784.5px"></div>
<div class="sel" style="left:755px;top:779.0px;width:110.79999999999995px;height:24.0px"><svg class="chev" width="9" height="6" viewBox="0 0 9 6"><path d="M0.9 0.8 L4.5 4.6 L8.1 0.8" fill="none" stroke="#1a1a1a" stroke-width="1.4"/></svg></div>
<div class="t" style="top:783.43px;font-size:13.33px;line-height:16px;color:#000;left:759px;">Full</div>
<div class="sel" style="left:880.9px;top:779.0px;width:63.700000000000045px;height:24.0px"><svg class="chev" width="9" height="6" viewBox="0 0 9 6"><path d="M0.9 0.8 L4.5 4.6 L8.1 0.8" fill="none" stroke="#1a1a1a" stroke-width="1.4"/></svg></div>
<div class="t" style="top:783.43px;font-size:13.33px;line-height:16px;color:#000;left:884.9px;">None</div>
<div class="sel" style="left:959.9px;top:779.0px;width:40.80000000000007px;height:24.0px"><svg class="chev" width="9" height="6" viewBox="0 0 9 6"><path d="M0.9 0.8 L4.5 4.6 L8.1 0.8" fill="none" stroke="#1a1a1a" stroke-width="1.4"/></svg></div>
<div class="t" style="top:783.43px;font-size:13.33px;line-height:16px;color:#000;left:963.9px;">1</div>
<div class="sel" style="left:1022.8px;top:779.0px;width:47.799999999999955px;height:24.0px"><svg class="chev" width="9" height="6" viewBox="0 0 9 6"><path d="M0.9 0.8 L4.5 4.6 L8.1 0.8" fill="none" stroke="#1a1a1a" stroke-width="1.4"/></svg></div>
<div class="t" style="top:783.43px;font-size:13.33px;line-height:16px;color:#000;left:1026.8px;">16×</div>
<div class="t" style="left:1106px;top:778px;font-size:11px;line-height:13px;color:#000;letter-spacing:0.145px;">1024 × 977Hz</div>
<div class="t" style="left:1091px;top:793px;font-size:11px;line-height:13px;color:#000;letter-spacing:0.247px;">(1024 × 0.170km/s)</div>
<div class="t" style="left:1201px;top:785px;font-size:11px;line-height:13px;color:#000;letter-spacing:0.250px;">2.369</div>
<div class="sel" style="left:1242.8px;top:779.0px;width:91.0px;height:24.0px"><svg class="chev" width="9" height="6" viewBox="0 0 9 6"><path d="M0.9 0.8 L4.5 4.6 L8.1 0.8" fill="none" stroke="#1a1a1a" stroke-width="1.4"/></svg></div>
<div class="t" style="top:783.43px;font-size:13.33px;line-height:16px;color:#000;left:1246.8px;">Essential</div>
<div class="t" style="left:1347px;top:784px;font-size:11px;line-height:13px;color:#000;letter-spacing:0.216px;">OH 1720 - 1.72053GHz</div>
<div class="inp" style="left:1469.5px;top:780.3px;width:164.5999999999999px;height:22.5px;background:#fefcf8;border-color:#8a8a8a"></div>
<svg class="b" style="left:1669.6px;top:783.6px" width="15" height="15" viewBox="0 0 15 15">
<defs><linearGradient id="rg3" x1="0" y1="0" x2="0" y2="1"><stop offset="0" stop-color="#ff8a6a"/><stop offset="0.45" stop-color="#ea2008"/><stop offset="1" stop-color="#c60e00"/></linearGradient></defs>
<circle cx="7.5" cy="7.5" r="6.7" fill="url(#rg3)" stroke="#d01c0c" stroke-width="0.7"/><circle cx="7.5" cy="7.5" r="5.6" fill="none" stroke="#ffb0a0" stroke-opacity="0.45" stroke-width="0.8"/>
<rect x="4.4" y="6.6" width="6.2" height="1.9" fill="#fff"/></svg>
<div class="chk" style="left:1722.1px;top:784.2px"></div>
<div class="btn" style="left:957px;top:822.6px;width:169px;height:22.0px;"></div>
<div class="t" style="top:826.33px;font-size:13.33px;line-height:16px;color:#000;left:937.0px;width:209px;text-align:center;">Add Subband To Baseband</div>
<div class="t" style="left:933px;top:852px;font-size:11px;line-height:13px;color:#000;letter-spacing:0.200px;">* Displayed as a Topocentric Observer</div>
<div class="q" style="left:1133px;top:852.8px">?</div>
<div class="b" style="left:323.6px;top:615.6px;width:1436.6px;height:261.3px;box-sizing:border-box;border:2.3px solid #ff00ff"></div>
<div class="b" style="left:292.4px;top:705px;width:25.5px;height:25.9px;background:#8b1f8b;border-radius:8.5px"></div>
<div class="t" style="top:707.76px;font-size:17px;line-height:20px;color:#fff;left:291.3px;width:26px;text-align:center;">2</div>
</body></html>
